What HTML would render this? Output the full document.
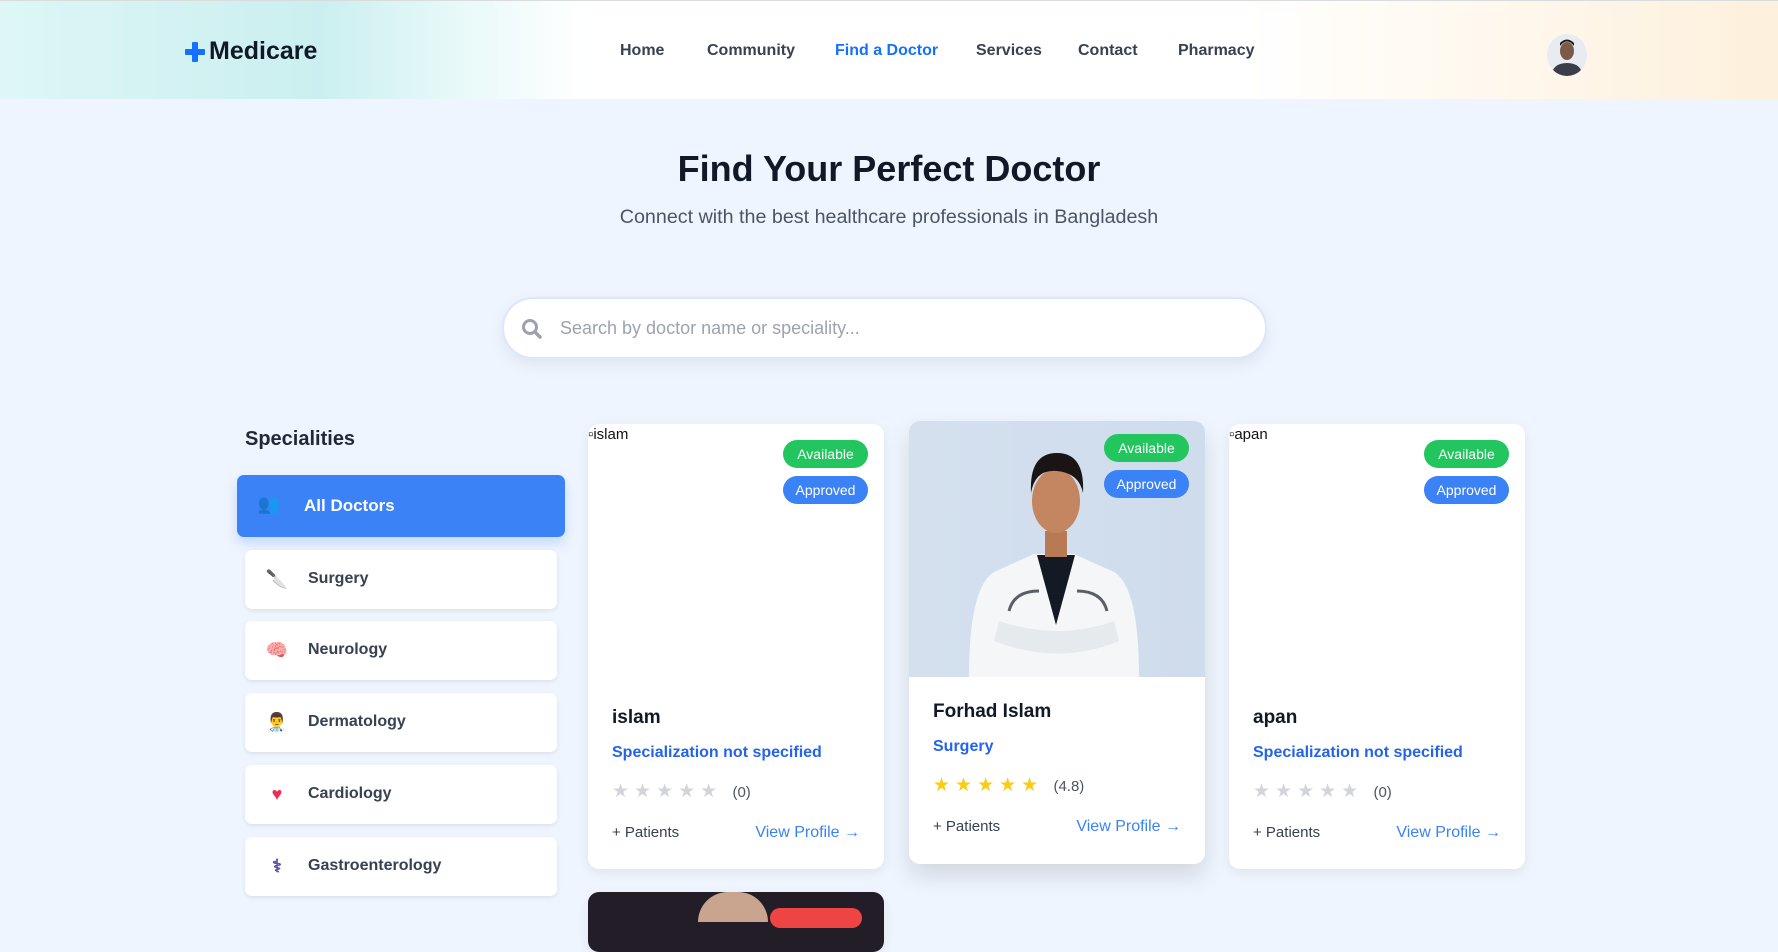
<!DOCTYPE html>
<html><head><meta charset="utf-8"><style>
*{box-sizing:border-box;margin:0;padding:0}
body{width:1778px;height:910px;overflow:hidden;background:#eff5fe;font-family:"Liberation Sans",sans-serif;position:relative;color:#1f2937}
.hdr{position:absolute;left:0;top:0;width:1778px;height:99px;border-top:1px solid #d8dcdc;background:linear-gradient(90deg,#def6f6 0%,#cbeff0 18%,#e9f9f9 26%,#fff 33%,#fff 70%,#fffaf2 80%,#fdf0dc 100%)}
.logo{position:absolute;left:185px;top:36px;font-size:25px;font-weight:bold;color:#111827;display:flex;align-items:center}
.plus{width:20px;height:20px;position:relative;margin-right:4px}
.plus:before{content:"";position:absolute;left:7px;top:0;width:6px;height:20px;background:#1570ff;border-radius:1px}
.plus:after{content:"";position:absolute;left:0;top:7px;width:20px;height:6px;background:#1570ff;border-radius:1px}
.nav a{position:absolute;top:41px;font-size:16px;color:#374151;font-weight:bold;text-decoration:none}
.av{position:absolute;left:1547px;top:33px;width:40px;height:42px;border-radius:50%;background:#e8ecf2;overflow:hidden}
h1{position:absolute;top:148px;width:100%;text-align:center;font-size:36px;color:#111827}
.sub{position:absolute;top:206px;width:100%;text-align:center;font-size:19.7px;color:#4b5563}
.search{position:absolute;left:502px;top:297px;width:765px;height:62px;border-radius:31px;background:#fff;border:2px solid #dbe7fb;box-shadow:0 6px 14px rgba(100,120,160,.12)}
.search span{position:absolute;left:56px;top:19px;font-size:18px;color:#9ca3af}
.spec{position:absolute;left:245px;top:428px;font-size:20px;font-weight:bold;color:#1f2937}
.all{position:absolute;left:237px;top:475px;width:328px;height:62px;border-radius:7px;background:#3b82f6;color:#fff;font-size:17px;font-weight:bold;box-shadow:0 6px 12px rgba(59,130,246,.25)}
.item{position:absolute;left:245px;width:312px;height:59px;background:#fff;border-radius:7px;box-shadow:0 2px 5px rgba(0,0,0,.08);font-size:16px;font-weight:bold;color:#374151}
.item .ic,.all .ic{position:absolute;left:20px;top:18px;font-size:18px;line-height:22px;width:24px;text-align:center}
.item .t{position:absolute;left:63px;top:20px}
.all .t{position:absolute;left:67px;top:21px}
.card{position:absolute;width:296px;height:445px;background:#fff;border-radius:11px;box-shadow:0 4px 12px rgba(0,0,0,.07);overflow:hidden}
.alt{position:absolute;left:0;top:2px;font-size:15px;color:#111}
.b{position:absolute;right:16px;width:85px;height:28px;border-radius:14px;color:#fff;font-size:14px;text-align:center;line-height:28px}
.g{top:16px;background:#22c55e}.bl{top:52px;background:#3b82f6}
.nm{position:absolute;left:24px;top:283px;font-size:19px;font-weight:bold;color:#111827}
.sp{position:absolute;left:24px;top:320px;font-size:16px;color:#2563eb;font-weight:bold}
.st{position:absolute;left:24px;top:356px;font-size:19px;color:#d1d5db;letter-spacing:5px}
.st i{font-style:normal;color:#4b5563;font-size:15px;letter-spacing:0}
.pt{position:absolute;left:24px;top:400px;font-size:15px;color:#374151}
.vp{position:absolute;right:24px;top:400px;font-size:16px;color:#3b82f6}
</style></head><body>
<div class="hdr">
 <div class="logo"><div class="plus"></div>Medicare</div>
 <div class="nav">
  <a style="left:620px">Home</a><a style="left:707px">Community</a><a style="left:835px;color:#1570ff">Find a Doctor</a><a style="left:976px">Services</a><a style="left:1078px">Contact</a><a style="left:1178px">Pharmacy</a>
 </div>
 <div class="av"><svg width="40" height="42"><ellipse cx="20" cy="17" rx="7" ry="9" fill="#7a5a48"/><path d="M13 12q7-9 14 0v-3q-7-7-14 0z" fill="#1a1a1a"/><path d="M4 42q2-13 16-13t16 13z" fill="#3a3d4a"/></svg></div>
</div>
<h1>Find Your Perfect Doctor</h1>
<div class="sub">Connect with the best healthcare professionals in Bangladesh</div>
<div class="search"><svg style="position:absolute;left:17px;top:19px" width="22" height="22" viewBox="0 0 22 22"><circle cx="9" cy="9" r="6.5" fill="none" stroke="#9ca3af" stroke-width="3"/><path d="M14 14l5 5" stroke="#9ca3af" stroke-width="3.5" stroke-linecap="round"/></svg><span>Search by doctor name or speciality...</span></div>
<div class="spec">Specialities</div>
<div class="all"><span class="ic">👥</span><span class="t">All Doctors</span></div>
<div class="item" style="top:550px"><span class="ic">🔪</span><span class="t">Surgery</span></div>
<div class="item" style="top:621px"><span class="ic">🧠</span><span class="t">Neurology</span></div>
<div class="item" style="top:693px"><span class="ic">👨‍⚕️</span><span class="t">Dermatology</span></div>
<div class="item" style="top:765px"><span class="ic" style="color:#ef2b55">♥</span><span class="t">Cardiology</span></div>
<div class="item" style="top:837px"><span class="ic" style="color:#5b4fa8">⚕</span><span class="t">Gastroenterology</span></div>

<div class="card" style="left:588px;top:424px"><span class="alt">▫islam</span><div class="b g">Available</div><div class="b bl">Approved</div>
<div class="nm">islam</div><div class="sp">Specialization not specified</div><div class="st">★★★★★ <i>(0)</i></div><div class="pt">+ Patients</div><div class="vp">View Profile →</div></div>

<div class="card" style="left:909px;top:421px;height:443px;box-shadow:0 12px 24px rgba(0,0,0,.12)">
<svg width="296" height="256" style="position:absolute;left:0;top:0"><defs><linearGradient id="bg" x1="0" x2="1"><stop offset="0" stop-color="#d4e0ee"/><stop offset="1" stop-color="#cfdcec"/></linearGradient></defs>
<rect width="296" height="256" fill="url(#bg)"/>
<path d="M60 256q0-90 25-105l40-18h40l40 18q25 15 25 105z" fill="#f4f6f8"/>
<path d="M128 134h38l-19 70z" fill="#141a24"/>
<rect x="136" y="110" width="22" height="26" fill="#b87a55"/>
<ellipse cx="147" cy="80" rx="24" ry="32" fill="#c48660"/>
<path d="M122 72q-2-40 26-40t26 40q-4-20-26-22t-26 22z" fill="#1a1414"/>
<path d="M90 200q60 20 115 0l5 20q-60 25-125 0z" fill="#e6e9ed"/>
<path d="M130 170q-25 0-30 20M168 170q25 0 30 20" stroke="#5a5f66" stroke-width="3" fill="none"/>
</svg>
<div class="b g" style="top:13px">Available</div><div class="b bl" style="top:49px">Approved</div>
<div class="nm" style="top:280px">Forhad Islam</div><div class="sp" style="top:317px">Surgery</div><div class="st" style="top:353px;color:#facc15">★★★★★ <i>(4.8)</i></div><div class="pt" style="top:397px">+ Patients</div><div class="vp" style="top:397px">View Profile →</div></div>

<div class="card" style="left:1229px;top:424px"><span class="alt">▫apan</span><div class="b g">Available</div><div class="b bl">Approved</div>
<div class="nm">apan</div><div class="sp">Specialization not specified</div><div class="st">★★★★★ <i>(0)</i></div><div class="pt">+ Patients</div><div class="vp">View Profile →</div></div>

<div class="card" style="left:588px;top:892px;height:60px;background:#221d26"><div style="position:absolute;left:110px;top:0;width:70px;height:30px;border-radius:35px 35px 0 0;background:#c9a58f"></div><div style="position:absolute;left:182px;top:16px;width:92px;height:20px;border-radius:10px;background:#ef4444"></div></div>
</body></html>
